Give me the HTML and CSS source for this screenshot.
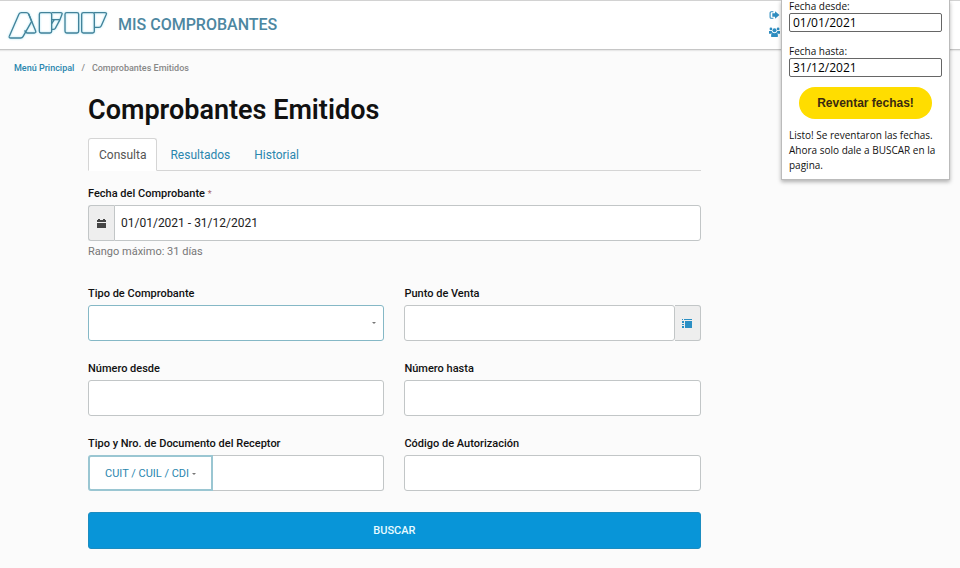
FILE: index.html
```html
<!DOCTYPE html>
<html lang="es">
<head>
  <meta charset="UTF-8" />
  <meta name="viewport" content="width=device-width, initial-scale=1.0" />
  <title>Mis Comprobantes - Comprobantes Emitidos</title>
  <link rel="stylesheet" href="styles.css">
</head>
<body>
  <header class="navbar">
    <a class="brand" href="#">
      <svg class="logo" viewBox="24 22 300 84" role="img" aria-label="AFIP">
        <path d="M28 98 L57 31 Q59 27 64 27 H79 Q84 27 86 31 L107 82 Q109 88 103 88 H82 Q78 88 76 84 L74 80" />
        <path d="M86 31 L95 53 L69 99 Q67 103 62 103 H32 Q26 103 28 98" />
        <rect x="118" y="27" width="37" height="61" rx="5" />
        <path d="M155 27 H182 Q188 27 186 32 L180 48 H155 M180 48 L166 74 Q164 77 160 77 H155 M155 60 L163 48" />
        <rect x="195" y="27" width="41" height="61" rx="5" />
        <rect x="245" y="27" width="38" height="61" rx="5" />
        <path d="M281 27 H315 Q321 27 319 32 L304 66 Q302 71 297 71 H283" />
      </svg>
      <span>MIS COMPROBANTES</span>
    </a>
    <div class="nav-icons">
      <a href="#" aria-label="Salir">
        <svg viewBox="0 0 20 16">
          <path class="line" d="M8 2 H4 Q2 2 2 4 V12 Q2 14 4 14 H8" />
          <path d="M6 5 H11 V1 L19 8 L11 15 V11 H6 Z" />
        </svg>
      </a>
      <a href="#" aria-label="Cambiar usuario">
        <svg viewBox="0 0 20 18">
          <circle cx="3.5" cy="3.5" r="2.5" />
          <circle cx="16.5" cy="3.5" r="2.5" />
          <circle cx="10" cy="6" r="3.6" />
          <path d="M0 7 H5 Q5 9 7 10 L4 12 H0 Z M20 7 H15 Q15 9 13 10 L16 12 H20 Z" />
          <path d="M4 18 Q3 11 7 10.5 Q10 12 13 10.5 Q17 11 16 18 Z" />
        </svg>
      </a>
    </div>
  </header>

  <nav class="breadcrumb" aria-label="Ruta">
    <a href="#">Menú Principal</a>
    <span>/</span>
    <span>Comprobantes Emitidos</span>
  </nav>

  <main class="container">
    <h1>Comprobantes Emitidos</h1>

    <nav class="tabs">
      <a class="tab active" href="#">Consulta</a>
      <a class="tab" href="#">Resultados</a>
      <a class="tab" href="#">Historial</a>
    </nav>

    <form class="search-form">
      <div class="field field-date">
        <label for="fecha">Fecha del Comprobante <span class="required">*</span></label>
        <div class="input-group">
          <span class="addon">
            <svg viewBox="0 0 9 9">
              <path d="M0 1 H1 V0 H3 V1 H6 V0 H8 V1 H9 V3 H0 Z M0 4 H9 V9 H0 Z" />
            </svg>
          </span>
          <input type="text" id="fecha" value="01/01/2021 - 31/12/2021" />
        </div>
        <small>Rango máximo: 31 días</small>
      </div>

      <div class="grid">
        <div class="field">
          <label for="tipo">Tipo de Comprobante</label>
          <div class="select-wrap">
            <select id="tipo"><option></option></select>
            <span class="caret"></span>
          </div>
        </div>
        <div class="field">
          <label for="punto">Punto de Venta</label>
          <div class="input-group">
            <input type="text" id="punto" />
            <button type="button" class="addon addon-list" aria-label="Ver puntos de venta">
              <svg viewBox="0 0 10 9">
                <path d="M0 0 H1 V1 H0 Z M2 0 H10 V1 H2 Z M0 2 H2 V4 H0 Z M0 5 H2 V6 H0 Z M0 7 H2 V9 H0 Z M3 2 H10 V9 H3 Z" />
              </svg>
            </button>
          </div>
        </div>
        <div class="field">
          <label for="desde">Número desde</label>
          <input type="text" id="desde" />
        </div>
        <div class="field">
          <label for="hasta">Número hasta</label>
          <input type="text" id="hasta" />
        </div>
        <div class="field">
          <label for="documento">Tipo y Nro. de Documento del Receptor</label>
          <div class="input-group">
            <button type="button" class="btn-doc">CUIT / CUIL / CDI <span class="caret"></span></button>
            <input type="text" id="documento" />
          </div>
        </div>
        <div class="field">
          <label for="codigo">Código de Autorización</label>
          <input type="text" id="codigo" />
        </div>
      </div>

      <button type="submit" class="btn-search">BUSCAR</button>
    </form>
  </main>

  <aside class="popup">
    <label for="popupDesde">Fecha desde:</label>
    <input type="text" id="popupDesde" value="01/01/2021" />
    <label for="popupHasta">Fecha hasta:</label>
    <input type="text" id="popupHasta" value="31/12/2021" />
    <button type="button">Reventar fechas!</button>
    <p>Listo! Se reventaron las fechas. Ahora solo dale a BUSCAR en la pagina.</p>
  </aside>
</body>
</html>
```

FILE: styles.css
```css
* {
  box-sizing: border-box;
}

body {
  margin: 0;
  font-family: Roboto, sans-serif;
  font-size: 12px;
  line-height: 16px;
  color: #111;
  background: #fbfbfb;
}

a {
  color: #2a86ae;
  text-decoration: none;
}

input,
select,
button {
  font-family: inherit;
}

.navbar {
  display: flex;
  align-items: center;
  height: 50px;
  padding: 0 180px 0 8px;
  justify-content: space-between;
  background: #fff;
  border-top: 1px solid #d2d2d2;
  border-bottom: 1px solid #c6c6c6;
  box-shadow: 0 1px 1px #e8e8e8;
}

.brand {
  display: flex;
  align-items: center;
  gap: 10px;
  font-size: 16px;
  font-weight: 500;
  color: #4d87a1;
}

.logo {
  width: 100px;
  height: 28px;
  fill: none;
  stroke: #43839a;
  stroke-width: 4;
  filter: drop-shadow(0 0 1px #a5e4f5);
}

.nav-icons {
  display: flex;
  flex-direction: column;
  gap: 7px;
  padding-bottom: 4px;
}

.nav-icons a {
  display: flex;
}

.nav-icons svg {
  width: 11px;
  height: 10px;
  fill: #2f8dc0;
}

.nav-icons .line {
  fill: none;
  stroke: #2f8dc0;
  stroke-width: 2;
}

.breadcrumb {
  display: flex;
  gap: 7px;
  padding: 10px 14px;
  font-size: 9px;
  font-weight: 500;
  color: #888;
}

.container {
  margin: 0 27% 0 88px;
}

h1 {
  margin: 8px 0 12px;
  font-size: 27px;
  line-height: 32px;
  font-weight: 600;
}

.tabs {
  display: flex;
  gap: 2px;
  border-bottom: 1px solid #d5d5d5;
}

.tab {
  padding: 8px 10px 7px;
  margin-bottom: -1px;
  border: 1px solid transparent;
  border-radius: 3px 3px 0 0;
}

.tab.active {
  color: #555;
  background: #fff;
  border-color: #d5d5d5;
  border-bottom-color: #fff;
}

.search-form {
  padding-top: 15px;
}

.field label {
  display: block;
  margin-bottom: 3px;
  font-size: 11px;
  font-weight: 500;
}

.required {
  font-size: 9px;
  font-weight: 400;
  color: #a66;
}

.field input,
.field select {
  display: block;
  width: 100%;
  min-width: 0;
  height: 36px;
  padding: 0 6px;
  font-size: 12px;
  color: #222;
  background: #fff;
  border: 1px solid #c2c6c7;
  border-radius: 3px;
}

.input-group {
  display: flex;
}

.input-group input {
  flex: 1;
}

.addon {
  display: flex;
  align-items: center;
  justify-content: center;
  width: 26px;
  padding: 0;
  background: #eee;
  border: 1px solid #c2c6c7;
  border-right: 0;
  border-radius: 3px 0 0 3px;
}

.addon svg {
  width: 9px;
  height: 9px;
  fill: #444;
}

.addon + input,
.btn-doc + input {
  border-top-left-radius: 0;
  border-bottom-left-radius: 0;
}

.addon-list {
  border: 1px solid #c2c6c7;
  border-left: 0;
  border-radius: 0 3px 3px 0;
}

.addon-list svg {
  width: 10px;
  fill: #2b8fc4;
}

.field small {
  display: block;
  margin-top: 3px;
  font-size: 11px;
  color: #777;
}

.grid {
  display: grid;
  grid-template-columns: 1fr 1fr;
  gap: 20px;
  margin: 26px 0 21px;
}

.select-wrap {
  position: relative;
}

.field select {
  appearance: none;
  border-color: #85b8c6;
}

.caret {
  display: inline-block;
  vertical-align: middle;
  border-top: 2px solid #777;
  border-left: 2px solid transparent;
  border-right: 2px solid transparent;
}

.select-wrap .caret {
  position: absolute;
  right: 8px;
  top: 17px;
  pointer-events: none;
}

.btn-doc {
  padding: 0 15px;
  font-size: 11px;
  color: #2a86ae;
  background: #fff;
  border: 2px solid #9ac6d2;
  border-radius: 3px 0 0 3px;
}

.btn-doc + input {
  border-left: 0;
}

.btn-search {
  display: block;
  width: 100%;
  height: 37px;
  font-size: 11px;
  font-weight: 500;
  color: #e9fbff;
  background: #0895d8;
  border: 1px solid #1b8cc0;
  border-radius: 3px;
}

/* extension popup, opened over the page */
.popup {
  position: absolute;
  top: 0;
  right: 10px;
  width: 169px;
  padding: 0 7px 6px;
  font-family: "Open Sans", "Noto Sans", sans-serif;
  font-size: 10px;
  line-height: 15px;
  background: #fff;
  border: 1px solid #bbb;
  border-top: 0;
  box-shadow: 0 2px 4px rgba(0, 0, 0, 0.3);
}

.popup label {
  display: block;
  line-height: 13px;
}

.popup input {
  display: block;
  width: 100%;
  height: 19px;
  margin-bottom: 13px;
  padding: 0 3px;
  font-size: 12px;
  border: 1px solid #666;
  border-radius: 2px;
}

.popup button {
  display: block;
  height: 32px;
  margin: -3px auto 9px;
  padding: 0 18px;
  font-family: "Liberation Sans", sans-serif;
  font-size: 12px;
  font-weight: 700;
  color: #3a2a10;
  background: #fd0;
  border: 0;
  border-radius: 16px;
}

.popup p {
  margin: 0;
}
```
